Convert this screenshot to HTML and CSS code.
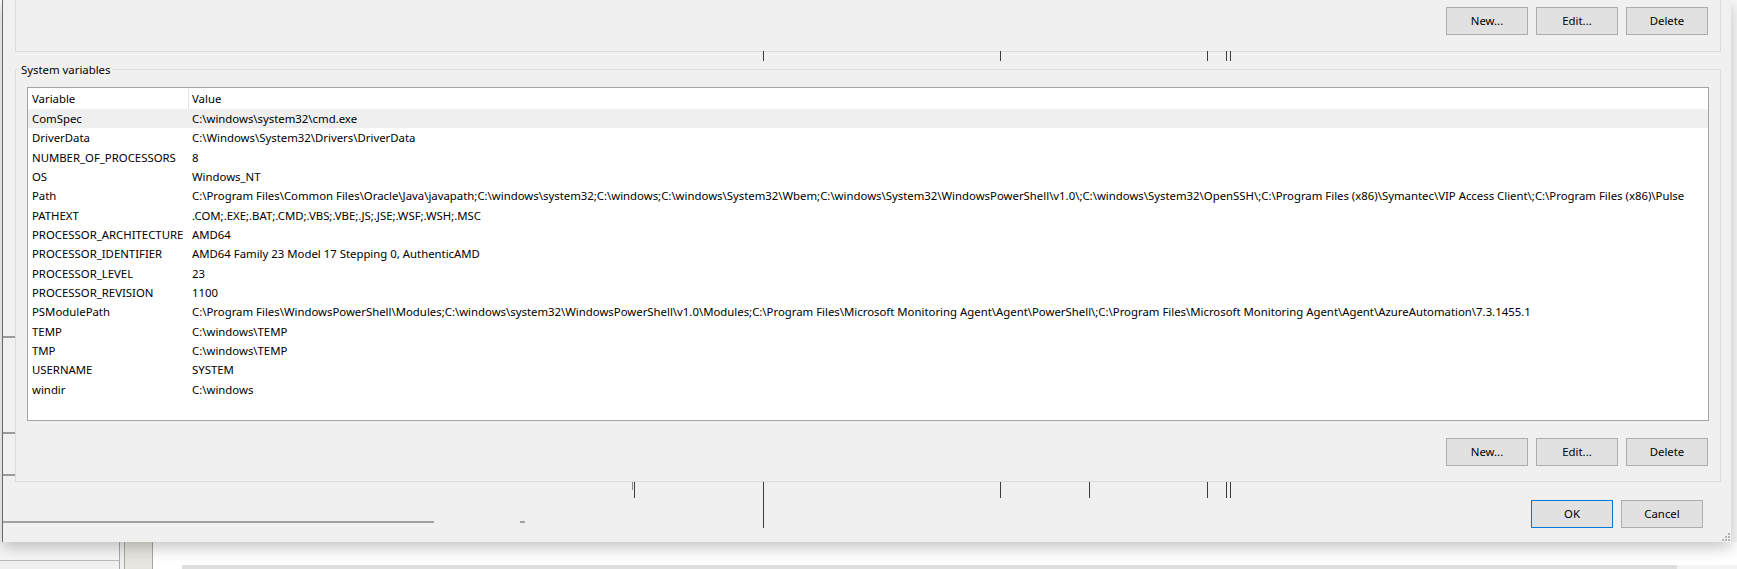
FILE: index.html
```html
<!DOCTYPE html>
<html lang="en">
<head>
<meta charset="utf-8">
<title>Environment Variables</title>
<link rel="stylesheet" href="styles.css">
</head>
<body>
<div class="screen">
  <div class="dialog">
    <div class="group-user">
      <div class="btn-row">
        <button class="btn">New...</button>
        <button class="btn">Edit...</button>
        <button class="btn">Delete</button>
      </div>
    </div>

    <fieldset class="group-sys">
      <legend>System variables</legend>
      <div class="sys-body">
        <div class="list">
          <div class="list-head">
            <div class="hcell hcell-var">Variable</div>
            <div class="hcell hcell-val">Value</div>
          </div>
          <div class="row selected"><div class="c-var">ComSpec</div><div class="c-val">C:\windows\system32\cmd.exe</div></div>
          <div class="row"><div class="c-var">DriverData</div><div class="c-val">C:\Windows\System32\Drivers\DriverData</div></div>
          <div class="row"><div class="c-var">NUMBER_OF_PROCESSORS</div><div class="c-val">8</div></div>
          <div class="row"><div class="c-var">OS</div><div class="c-val">Windows_NT</div></div>
          <div class="row"><div class="c-var">Path</div><div class="c-val">C:\Program Files\Common Files\Oracle\Java\javapath;C:\windows\system32;C:\windows;C:\windows\System32\Wbem;C:\windows\System32\WindowsPowerShell\v1.0\;C:\windows\System32\OpenSSH\;C:\Program Files (x86)\Symantec\VIP Access Client\;C:\Program Files (x86)\Pulse</div></div>
          <div class="row"><div class="c-var">PATHEXT</div><div class="c-val">.COM;.EXE;.BAT;.CMD;.VBS;.VBE;.JS;.JSE;.WSF;.WSH;.MSC</div></div>
          <div class="row"><div class="c-var">PROCESSOR_ARCHITECTURE</div><div class="c-val">AMD64</div></div>
          <div class="row"><div class="c-var">PROCESSOR_IDENTIFIER</div><div class="c-val">AMD64 Family 23 Model 17 Stepping 0, AuthenticAMD</div></div>
          <div class="row"><div class="c-var">PROCESSOR_LEVEL</div><div class="c-val">23</div></div>
          <div class="row"><div class="c-var">PROCESSOR_REVISION</div><div class="c-val">1100</div></div>
          <div class="row"><div class="c-var">PSModulePath</div><div class="c-val">C:\Program Files\WindowsPowerShell\Modules;C:\windows\system32\WindowsPowerShell\v1.0\Modules;C:\Program Files\Microsoft Monitoring Agent\Agent\PowerShell\;C:\Program Files\Microsoft Monitoring Agent\Agent\AzureAutomation\7.3.1455.1</div></div>
          <div class="row"><div class="c-var">TEMP</div><div class="c-val">C:\windows\TEMP</div></div>
          <div class="row"><div class="c-var">TMP</div><div class="c-val">C:\windows\TEMP</div></div>
          <div class="row"><div class="c-var">USERNAME</div><div class="c-val">SYSTEM</div></div>
          <div class="row"><div class="c-var">windir</div><div class="c-val">C:\windows</div></div>
        </div>
        <div class="btn-row btn-row-sys">
          <button class="btn">New...</button>
          <button class="btn">Edit...</button>
          <button class="btn">Delete</button>
        </div>
      </div>
    </fieldset>

    <div class="actions">
      <button class="btn btn-default">OK</button>
      <button class="btn">Cancel</button>
    </div>

    <!-- repaint artifacts lying over the dialog -->
    <span class="art vt v1"></span>
    <span class="art vt v2"></span>
    <span class="art vt v3"></span>
    <span class="art vt v4"></span>
    <span class="art vt v5"></span>
    <span class="art vb b1"></span>
    <span class="art vb b2"></span>
    <span class="art vb b3"></span>
    <span class="art vb b4"></span>
    <span class="art vb b5"></span>
    <span class="art vb b6"></span>
    <span class="art vb b7"></span>
    <span class="art vb b8"></span>
    <span class="art hl h1"></span>
    <span class="art hl h2"></span>
    <span class="art hl h3"></span>
    <span class="art hline"></span>
    <span class="art hdot"></span>

    <svg class="grip" width="9" height="9" viewBox="0 0 9 9" aria-hidden="true">
      <rect x="7" y="1" width="2" height="2" fill="#b4b4b4"/>
      <rect x="4" y="4" width="2" height="2" fill="#b4b4b4"/>
      <rect x="7" y="4" width="2" height="2" fill="#b4b4b4"/>
      <rect x="1" y="7" width="2" height="2" fill="#b4b4b4"/>
      <rect x="4" y="7" width="2" height="2" fill="#b4b4b4"/>
      <rect x="7" y="7" width="2" height="2" fill="#b4b4b4"/>
    </svg>
  </div>

  <div class="backdrop">
    <div class="bd-left">
      <div class="bd-left-top"></div>
      <div class="bd-left-bot"></div>
    </div>
    <div class="bd-line"></div>
    <div class="bd-gap"></div>
    <div class="bd-line"></div>
    <div class="bd-beige"></div>
    <div class="bd-line"></div>
    <div class="bd-main">
      <div class="bd-bar">
        <div class="bar-gap"></div>
        <div class="bar-mid"></div>
        <div class="bar-end"></div>
      </div>
    </div>
  </div>
</div>
</body>
</html>
```

FILE: styles.css
```css
* { box-sizing: border-box; }

html, body {
  margin: 0;
  padding: 0;
}

body {
  width: 1737px;
  height: 569px;
  overflow: hidden;
  background: #f7f7f7;
  font-family: "Noto Sans", "Open Sans", sans-serif;
  font-size: 11.36px;
  color: #000;
}

.screen {
  display: flex;
  flex-direction: column;
  height: 569px;
}

/* ---------- dialog ---------- */
.dialog {
  position: relative;
  z-index: 1;
  flex: none;
  margin-left: 2px;
  width: 1729px;
  height: 542px;
  padding: 0 10px 0 12px;
  background: #f0f0f0;
  border-left: 1px solid #6b6b6b;
  box-shadow: 0 6px 14px rgba(0, 0, 0, 0.22);
  display: flex;
  flex-direction: column;
}

.group-user {
  border: 1px solid #dcdcdc;
  border-top: none;
  padding: 7px 12px 16px 0;
}

.btn-row {
  display: flex;
  justify-content: flex-end;
  gap: 8px;
}

.btn {
  width: 82px;
  height: 28px;
  padding: 0;
  margin: 0;
  border: 1px solid #adadad;
  background: #e1e1e1;
  font: inherit;
  color: #000;
  line-height: 26px;
}

.btn-default {
  border-color: #0078d7;
}

/* ---------- system variables group ---------- */
.group-sys {
  margin: 10px 0 0;
  padding: 0;
  min-width: 0;
  border: 1px solid #dcdcdc;
}

.group-sys legend {
  margin-left: 3px;
  padding: 0 2px;
  line-height: 15px;
}

.sys-body {
  padding: 10px 11px 15px;
}

.list {
  height: 334px;
  border: 1px solid #a3a3a3;
  background: #fff;
  overflow: hidden;
}

.list-head {
  display: grid;
  grid-template-columns: 161px 1fr;
  height: 21px;
}

.hcell {
  line-height: 21px;
  white-space: nowrap;
}

.hcell-var {
  padding-left: 4px;
  border-right: 1px solid #e5e5e5;
}

.hcell-val {
  padding-left: 3px;
}

.row {
  display: grid;
  grid-template-columns: 160px 1fr;
  height: 19.33px;
  line-height: 19.33px;
  white-space: nowrap;
}

.row.selected {
  background: #efefef;
}

.c-var {
  padding-left: 4px;
  overflow: hidden;
}

.c-val {
  padding-left: 4px;
  overflow: hidden;
}

.btn-row-sys {
  margin-top: 17px;
  padding-right: 1px;
}

/* ---------- OK / Cancel ---------- */
.actions {
  display: flex;
  justify-content: flex-end;
  gap: 8px;
  margin-top: 18px;
  padding-right: 18px;
}

/* ---------- repaint artifacts (overlay) ---------- */
.art {
  position: absolute;
  display: block;
}

.vt, .vb {
  width: 1px;
  background: #3c3c3c;
}

.vt { top: 51px; height: 10px; }
.v1 { left: 760px; }
.v2 { left: 997px; }
.v3 { left: 1204px; }
.v4 { left: 1223px; }
.v5 { left: 1227px; }

.vb { top: 482px; height: 16px; }
.b1 { left: 629px; height: 8px; background: #888; }
.b2 { left: 631px; }
.b3 { left: 760px; height: 46px; }
.b4 { left: 997px; }
.b5 { left: 1086px; }
.b6 { left: 1204px; }
.b7 { left: 1223px; }
.b8 { left: 1227px; }

.hl {
  left: 0;
  width: 12px;
  height: 2px;
  background: #9a9a9a;
}
.h1 { top: 336px; }
.h2 { top: 432px; }
.h3 { top: 474px; }

.hline {
  left: 0;
  top: 521px;
  width: 431px;
  height: 2px;
  background: #a0a0a0;
}

.hdot {
  left: 517px;
  top: 521px;
  width: 5px;
  height: 2px;
  background: #a0a0a0;
}

.grip {
  position: absolute;
  right: 1px;
  bottom: 1px;
}

/* ---------- what lies behind, below the dialog ---------- */
.backdrop {
  flex: 1;
  display: flex;
}

.bd-left {
  width: 119px;
  display: flex;
  flex-direction: column;
}

.bd-left-top {
  height: 19px;
  background: #f6f6f6;
  border-bottom: 1px solid #b9b9b9;
}

.bd-left-bot {
  flex: 1;
  background: #f0f0f0;
}

.bd-line {
  width: 1px;
  background: #a6a6a6;
}

.bd-gap {
  width: 4px;
  background: #f0f0f0;
}

.bd-beige {
  width: 27px;
  background: #e6e5df;
}

.bd-main {
  flex: 1;
  background: #fff;
  display: flex;
  flex-direction: column;
  justify-content: flex-end;
}

.bd-bar {
  height: 4px;
  display: flex;
}

.bar-gap { width: 29px; background: #fff; }
.bar-mid { width: 1495px; background: #dedede; }
.bar-end { flex: 1; background: #f3f3f3; }
```
